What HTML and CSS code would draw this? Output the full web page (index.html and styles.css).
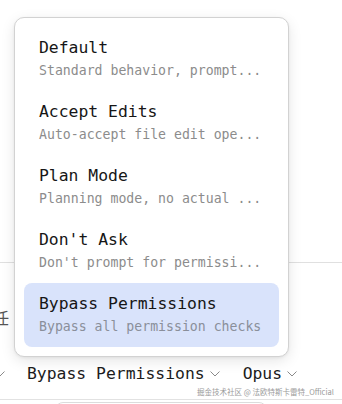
FILE: index.html
```html
<!DOCTYPE html>
<html>
<head>
<meta charset="utf-8">
<link rel="stylesheet" href="styles.css">
</head>
<body>
<div class="page">
  <div class="upper"></div>
  <div class="cjk-row"><span class="cut-char">任</span></div>
  <div class="toolbar">
    <span class="chev lead-chev"><svg width="10" height="6" viewBox="0 0 10 6"><polyline points="0.5,0.5 5,5 9.5,0.5" fill="none" stroke="#8a8a8a" stroke-width="1"/></svg></span>
    <span class="tool-label">Bypass Permissions</span>
    <span class="chev"><svg width="10" height="6" viewBox="0 0 10 6"><polyline points="0.5,0.5 5,5 9.5,0.5" fill="none" stroke="#8a8a8a" stroke-width="1"/></svg></span>
    <span class="tool-label model">Opus</span>
    <span class="chev"><svg width="10" height="6" viewBox="0 0 10 6"><polyline points="0.5,0.5 5,5 9.5,0.5" fill="none" stroke="#8a8a8a" stroke-width="1"/></svg></span>
  </div>
  <div class="watermark">掘金技术社区 @ 法欧特斯卡雷特_Official</div>
  <div class="bottom-line"></div>
  <div class="input-box"></div>

  <div class="menu">
    <div class="item">
      <div class="title">Default</div>
      <div class="desc">Standard behavior, prompt...</div>
    </div>
    <div class="item">
      <div class="title">Accept Edits</div>
      <div class="desc">Auto-accept file edit ope...</div>
    </div>
    <div class="item">
      <div class="title">Plan Mode</div>
      <div class="desc">Planning mode, no actual ...</div>
    </div>
    <div class="item">
      <div class="title">Don't Ask</div>
      <div class="desc">Don't prompt for permissi...</div>
    </div>
    <div class="item active">
      <div class="title">Bypass Permissions</div>
      <div class="desc">Bypass all permission checks</div>
    </div>
  </div>
</div>
</body>
</html>
```
FILE: styles.css
```css
html, body {
  margin: 0;
  padding: 0;
  background: #ffffff;
}
body {
  font-family: "DejaVu Sans Mono", "Liberation Mono", monospace;
  overflow: hidden;
}
.page {
  position: relative;
  width: 342px;
  height: 404px;
  display: flex;
  flex-direction: column;
  overflow: hidden;
}
.upper {
  height: 262px;
  border-bottom: 1px solid #e0e0e0;
  flex: none;
}
.cjk-row {
  height: 18px;
  margin-top: 45px;
  font-family: "Noto Sans CJK SC", sans-serif;
  font-size: 16px;
  line-height: 18px;
  color: #555;
  flex: none;
}
.cut-char {
  display: inline-block;
  margin-left: -7px;
}
.toolbar {
  flex: none;
  margin-top: 38px;
  height: 20px;
  display: flex;
  align-items: center;
  font-size: 16.4px;
  color: #1c1c1c;
}
.chev {
  display: inline-flex;
  align-items: center;
  height: 20px;
}
.chev svg { display: block; }
.lead-chev {
  margin-left: -5px;
  margin-right: 22px;
}
.tool-label {
  line-height: 20px;
  margin-right: 5px;
}
.tool-label.model {
  margin-left: 23px;
}
.watermark {
  flex: none;
  height: 11px;
  margin-top: 2px;
  padding-left: 197px;
  font-family: "Noto Sans CJK SC", sans-serif;
  font-size: 7.5px;
  line-height: 11px;
  color: #9a9a9a;
  white-space: nowrap;
}
.bottom-line {
  flex: none;
  height: 0;
  margin-top: 2px;
  border-top: 1px solid #e2e2e2;
}
.input-box {
  flex: none;
  margin-top: 2px;
  margin-left: 55px;
  width: 210px;
  height: 20px;
  border: 1px solid #dcdcdc;
  border-radius: 8px 8px 0 0;
}
.menu {
  position: absolute;
  left: 14px;
  top: 17px;
  width: 275px;
  box-sizing: border-box;
  padding: 9px;
  background: #ffffff;
  border: 1px solid #d2d2d2;
  border-radius: 10px;
  box-shadow: 0 4px 14px rgba(0, 0, 0, 0.10), 0 1px 3px rgba(0, 0, 0, 0.06);
  display: flex;
  flex-direction: column;
}
.item {
  padding: 12px 15px;
  border-radius: 8px;
  height: 64px;
  box-sizing: border-box;
}
.item.active {
  background: #d9e3fb;
}
.title {
  font-size: 16.4px;
  line-height: 18px;
  color: #161616;
  white-space: nowrap;
}
.desc {
  margin-top: 6px;
  font-size: 13.2px;
  line-height: 16px;
  color: #8c8c8c;
  white-space: nowrap;
}
.item.active .desc {
  color: #8a8f9a;
}
```
